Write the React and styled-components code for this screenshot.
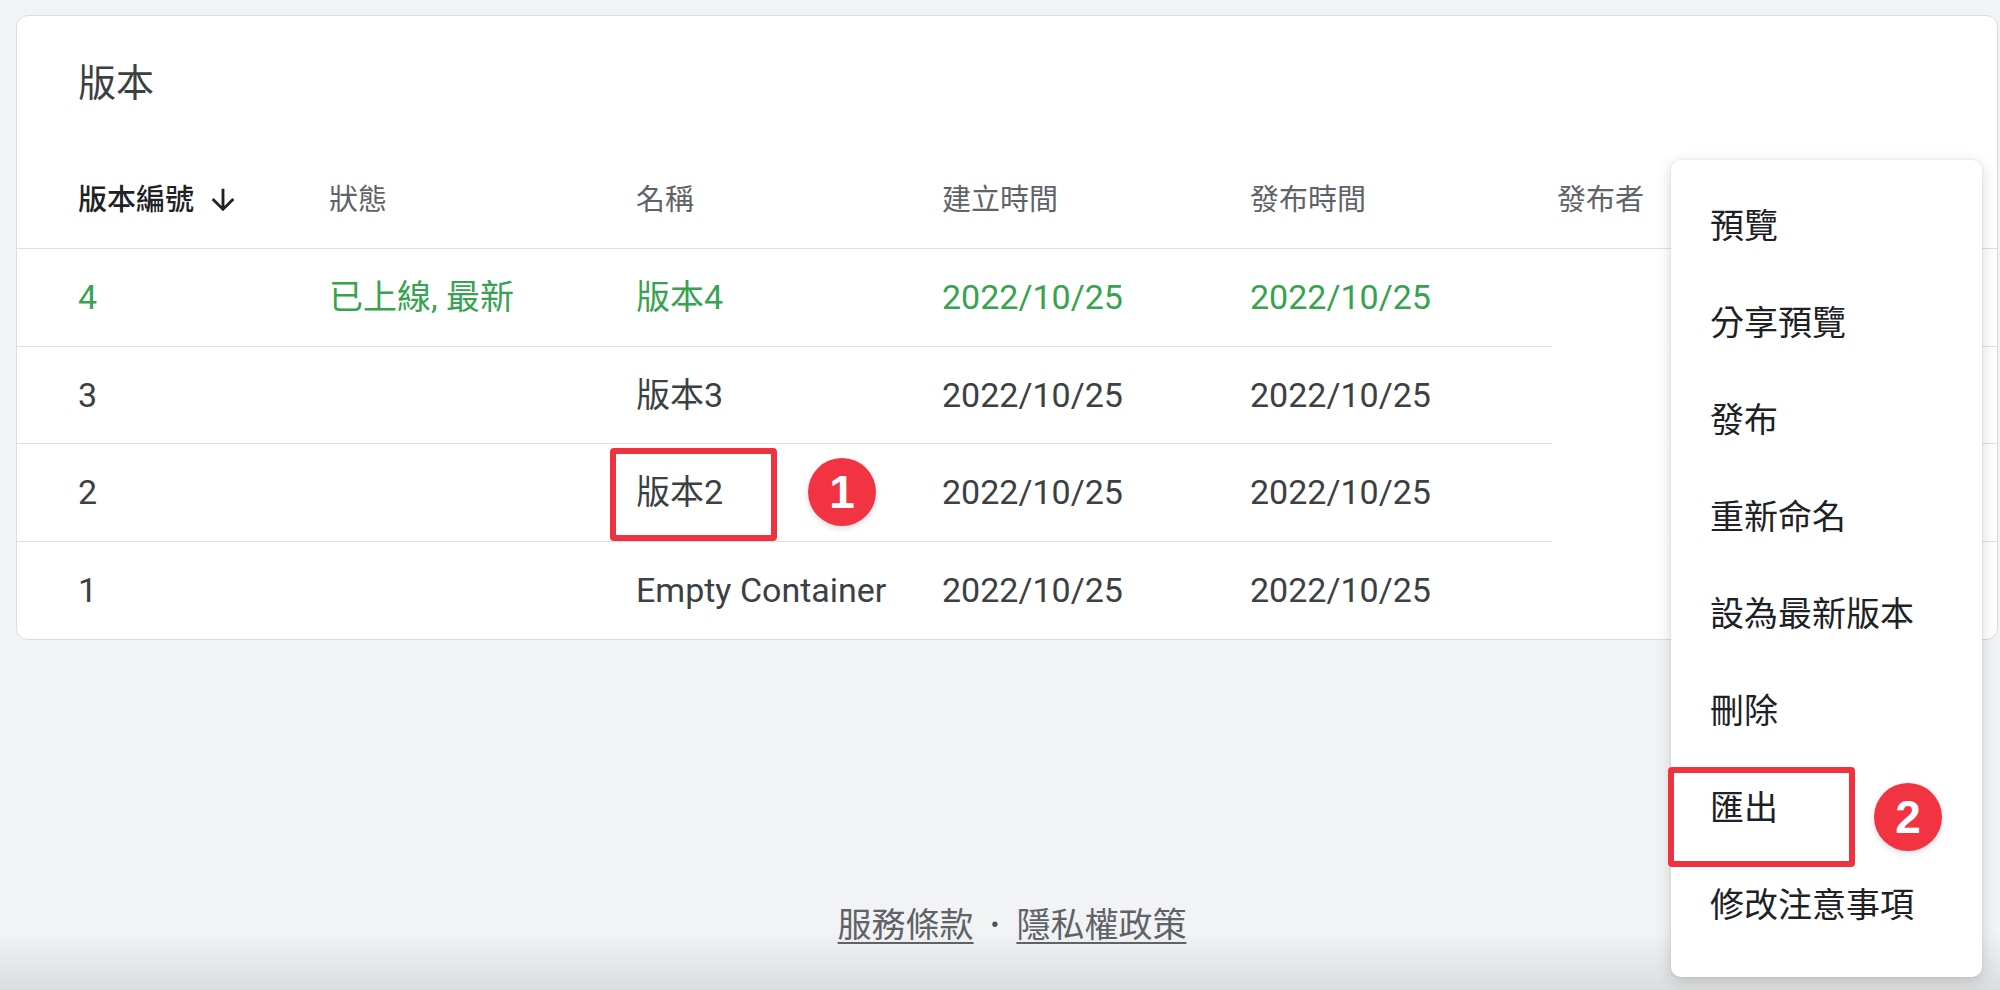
import React from "react"
import styled, { createGlobalStyle } from "styled-components"

const GlobalStyle = createGlobalStyle`
  html, body {
    margin: 0;
    padding: 0;
  }
  body {
    font-family: Roboto, "Noto Sans CJK TC", sans-serif;
    background: linear-gradient(to bottom, #f1f3f4 0, #f1f3f4 94%, #dcdddf 100%);
    color: #3c4043;
  }
`

const Page = styled.div`
  position: relative;
  min-height: 100vh;
  box-sizing: border-box;
  display: flex;
  flex-direction: column;
  padding: 15px 2px 0 16px;
`

const Card = styled.section`
  background: #fff;
  border: 1px solid #dadce0;
  border-radius: 12px;
  overflow: hidden;
`

const Title = styled.h2`
  margin: 0;
  padding: 44px 0 46px 61px;
  font-size: 38px;
  line-height: 46px;
  font-weight: 400;
  color: #3c4043;
`

const Row = styled.div`
  display: grid;
  grid-template-columns: 251px 307px 306px 308px 307px 1fr;
  align-items: center;
  box-sizing: border-box;
  height: ${(p) => (p.$head ? "97px" : "97.5px")};
  padding-left: 61px;
  border-bottom: 1px solid #e0e0e0;
  &:last-child {
    border-bottom: none;
  }
`

const HeadCell = styled.div`
  display: flex;
  align-items: center;
  gap: 12px;
  font-size: 29px;
  line-height: 36px;
  font-weight: ${(p) => (p.$active ? 500 : 400)};
  color: ${(p) => (p.$active ? "#202124" : "#5f6368")};
  white-space: nowrap;
`

const Cell = styled.div`
  font-size: 34px;
  line-height: 42px;
  color: ${(p) => (p.$live ? "#37a24f" : "#3c4043")};
  white-space: nowrap;
  overflow: hidden;
`

const Backdrop = styled.div`
  position: absolute;
  left: 1552px;
  top: 272px;
  width: 118px;
  height: 365px;
  background: #fff;
  border-radius: 0 10px 0 0;
`

const Menu = styled.ul`
  position: absolute;
  left: 1671px;
  top: 160px;
  width: 311px;
  margin: 0;
  padding: 15px 0 26px;
  list-style: none;
  background: #fff;
  border-radius: 10px;
  box-shadow: 0 4px 16px rgba(0, 0, 0, 0.16), 0 0 3px rgba(0, 0, 0, 0.08);
`

const MenuItem = styled.li`
  display: flex;
  align-items: center;
  height: 97px;
  padding-left: 39px;
  font-size: 34px;
  color: #202124;
  white-space: nowrap;
`

const Highlight = styled.div`
  position: absolute;
  box-sizing: border-box;
  border: 6px solid #f0323f;
  border-radius: 4px;
`

const Badge = styled.div`
  position: absolute;
  width: 68px;
  height: 68px;
  border-radius: 50%;
  background: #f23342;
  color: #fff;
  display: flex;
  align-items: center;
  justify-content: center;
  font-family: "Liberation Sans", Arial, sans-serif;
  font-weight: 700;
  font-size: 46px;
  box-shadow: 0 2px 6px rgba(0, 0, 0, 0.15);
`

const Footer = styled.footer`
  margin-top: auto;
  padding: 0 0 42px 10px;
  display: flex;
  justify-content: center;
  align-items: center;
  gap: 17px;
  font-size: 34px;
  line-height: 46px;
  color: #5f6368;
`

const FooterLink = styled.a`
  color: #5f6368;
  text-decoration: underline;
  text-decoration-thickness: 2px;
  text-underline-offset: 5px;
`

const Dot = styled.span`
  font-size: 26px;
  color: #4d5156;
`

const SortArrow = () => (
  <svg width="34" height="34" viewBox="0 0 24 24" fill="#202124">
    <path d="M20 12l-1.41-1.41L13 16.17V4h-2v12.17l-5.58-5.59L4 12l8 8 8-8z" />
  </svg>
)

const rows = [
  { id: "4", status: "已上線, 最新", name: "版本4", live: true },
  { id: "3", status: "", name: "版本3" },
  { id: "2", status: "", name: "版本2" },
  { id: "1", status: "", name: "Empty Container" },
]

const menuItems = [
  "預覽",
  "分享預覽",
  "發布",
  "重新命名",
  "設為最新版本",
  "刪除",
  "匯出",
  "修改注意事項",
]

export default function App() {
  return (
    <>
      <GlobalStyle />
      <Page>
        <Card>
          <Title>版本</Title>
          <div>
            <Row $head>
              <HeadCell $active>
                版本編號 <SortArrow />
              </HeadCell>
              <HeadCell>狀態</HeadCell>
              <HeadCell>名稱</HeadCell>
              <HeadCell>建立時間</HeadCell>
              <HeadCell>發布時間</HeadCell>
              <HeadCell>發布者</HeadCell>
            </Row>
            {rows.map((r) => (
              <Row key={r.id}>
                <Cell $live={r.live}>{r.id}</Cell>
                <Cell $live={r.live}>{r.status}</Cell>
                <Cell $live={r.live}>{r.name}</Cell>
                <Cell $live={r.live}>2022/10/25</Cell>
                <Cell $live={r.live}>2022/10/25</Cell>
                <Cell $live={r.live} />
              </Row>
            ))}
          </div>
        </Card>

        <Footer>
          <FooterLink>服務條款</FooterLink>
          <Dot>•</Dot>
          <FooterLink>隱私權政策</FooterLink>
        </Footer>

        <Backdrop />
        <Menu>
          {menuItems.map((m) => (
            <MenuItem key={m}>{m}</MenuItem>
          ))}
        </Menu>

        <Highlight style={{ left: 610, top: 448, width: 167, height: 93 }} />
        <Badge style={{ left: 808, top: 458 }}>1</Badge>
        <Highlight style={{ left: 1668, top: 767, width: 187, height: 100 }} />
        <Badge style={{ left: 1874, top: 783 }}>2</Badge>
      </Page>
    </>
  )
}
